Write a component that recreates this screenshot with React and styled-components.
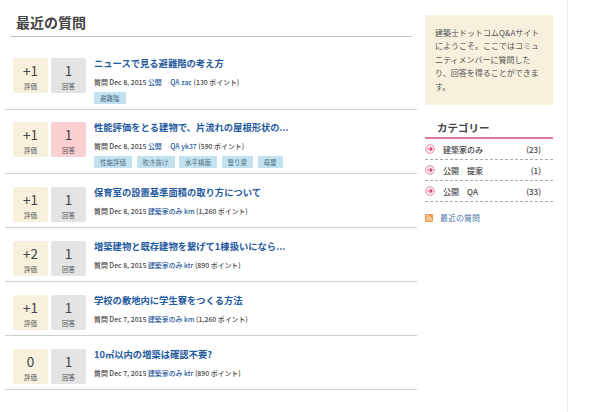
import React from "react";
import styled, { createGlobalStyle } from "styled-components";

const Global = createGlobalStyle`
  html, body { margin: 0; padding: 0; background: #fff; }
  body { font-family: "Noto Sans CJK JP", "Noto Sans", sans-serif; color: #444; }
  a { text-decoration: none; color: #1f5a9e; }
`;

const Page = styled.div`
  display: flex;
  width: 568px;
  height: 412px;
  box-sizing: border-box;
  border-right: 1px solid #eeeeee;
  overflow: hidden;
`;
const Main = styled.main`
  width: 412px;
  margin-left: 5px;
  flex: none;
`;
const Heading = styled.h1`
  margin: 0 5px;
  padding: 13px 0 0 6px;
  height: 23px;
  font-size: 14px;
  line-height: 19px;
  font-weight: 700;
  color: #444;
  border-bottom: 1px solid #c4c4c4;
`;
const List = styled.div`
  margin-top: 8px;
`;
const Row = styled.div`
  display: flex;
  padding: ${p => (p.$tagged ? "12px" : "13px")} 0 5px 8px;
  border-bottom: 1px solid #cfcfcf;
  &:first-child { padding-top: 13px; }
`;
const Stat = styled.div`
  width: 35px;
  height: 35px;
  margin-right: 3px;
  flex: none;
  border-radius: 2px;
  background: ${p => p.$bg};
  text-align: center;
  color: #444;
`;
const Num = styled.div`
  font-size: 13.5px;
  line-height: 15px;
  padding-top: 5px;
`;
const Label = styled.div`
  margin-top: 3px;
  font-size: 6.5px;
  line-height: 10px;
  color: #555;
`;
const Body = styled.div`
  margin-left: 5px;
  min-width: 0;
`;
const Title = styled.a`
  display: block;
  margin-top: -1px;
  font-size: 9.3px;
  line-height: 12px;
  font-weight: 700;
  white-space: nowrap;
`;
const Meta = styled.div`
  margin-top: 7.5px;
  font-size: 6.9px;
  line-height: 10px;
  color: #4a4a4a;
  font-weight: 500;
  white-space: pre;
`;
const Tags = styled.div`
  display: flex;
  gap: 4.5px;
  margin-top: 5.5px;
`;
const Tag = styled.span`
  height: 12px;
  padding: 0 6px;
  font-size: 6.5px;
  line-height: 12px;
  color: #4d6f80;
  background: #c3e2f0;
  border-radius: 1px;
`;
const Side = styled.aside`
  width: 128px;
  margin-left: 8px;
  flex: none;
  padding-top: 15px;
`;
const Welcome = styled.div`
  height: 90px;
  box-sizing: border-box;
  padding: 11px 10px 0;
  background: #f7f0dc;
  border-radius: 2px;
  font-size: 8px;
  line-height: 13.4px;
  color: #555;
`;
const CatTitle = styled.h2`
  margin: 14px 0 0;
  padding-left: 12px;
  height: 18px;
  font-size: 10.5px;
  line-height: 17px;
  font-weight: 700;
  color: #444;
  border-bottom: 2px solid #d9789a;
`;
const CatRow = styled.div`
  display: flex;
  align-items: center;
  height: 20px;
  border-bottom: 1px dashed #aaa;
  font-size: 8px;
  font-weight: 500;
  color: #444;
`;
const CatName = styled.span`
  flex: 1;
  margin-left: 8px;
  white-space: pre;
`;
const CatCount = styled.span`
  margin-right: 12px;
`;
const Feed = styled.a`
  display: flex;
  align-items: center;
  gap: 7px;
  margin-top: 10px;
  font-size: 8px;
  line-height: 12px;
  color: #4a74a8;
`;

const Arrow = () => (
  <svg width="10" height="10" viewBox="0 0 10 10" style={{ flex: "none" }}>
    <circle cx="5" cy="5" r="4.3" fill="#fbeef2" stroke="#e58aa8" strokeWidth="1" />
    <path d="M2.6 5H7M5.2 3.2 7.1 5 5.2 6.8" fill="none" stroke="#d6386f" strokeWidth="1.1" />
  </svg>
);

const Rss = () => (
  <svg width="8" height="8" viewBox="0 0 8 8" style={{ flex: "none" }}>
    <rect width="8" height="8" rx="1" fill="#ee9a4d" />
    <circle cx="2" cy="6" r=".8" fill="#fff" />
    <path d="M1.3 3.6A3.1 3.1 0 0 1 4.4 6.7M1.3 1.6A5.1 5.1 0 0 1 6.4 6.7" fill="none" stroke="#fff" strokeWidth=".9" />
  </svg>
);

const questions = [
  { score: "+1", title: "ニュースで見る避難階の考え方", date: "Dec 8, 2015", where: "公開　", user: "QA zac", pts: "130", tags: ["避難階"] },
  { score: "+1", hot: true, title: "性能評価をとる建物で、片流れの屋根形状の...", date: "Dec 8, 2015", where: "公開　", user: "QA yk37", pts: "590", tags: ["性能評価", "吹き抜け", "水平構面", "登り梁", "母屋"] },
  { score: "+1", title: "保育室の設置基準面積の取り方について", date: "Dec 8, 2015", where: "建築家のみ", user: "km", pts: "1,260" },
  { score: "+2", title: "増築建物と既存建物を繋げて1棟扱いになら...", date: "Dec 8, 2015", where: "建築家のみ", user: "ktr", pts: "890" },
  { score: "+1", title: "学校の敷地内に学生寮をつくる方法", date: "Dec 7, 2015", where: "建築家のみ", user: "km", pts: "1,260" },
  { score: "0", title: "10㎡以内の増築は確認不要?", date: "Dec 7, 2015", where: "建築家のみ", user: "ktr", pts: "890" },
];

const categories = [
  { name: "建築家のみ", count: 23 },
  { name: "公開　提案", count: 1 },
  { name: "公開　QA", count: 33 },
];

export default function App() {
  return (
    <Page>
      <Global />
      <Main>
        <Heading>最近の質問</Heading>
        <List>
          {questions.map(q => (
            <Row key={q.title} $tagged={!!q.tags}>
              <Stat $bg="#f7f0dc">
                <Num>{q.score}</Num>
                <Label>評価</Label>
              </Stat>
              <Stat $bg={q.hot ? "#fcd0d3" : "#e4e4e4"}>
                <Num>1</Num>
                <Label>回答</Label>
              </Stat>
              <Body>
                <Title href="#">{q.title}</Title>
                <Meta>
                  質問 {q.date} <a href="#">{q.where} {q.user}</a> ({q.pts} ポイント)
                </Meta>
                {q.tags && (
                  <Tags>
                    {q.tags.map(t => <Tag key={t}>{t}</Tag>)}
                  </Tags>
                )}
              </Body>
            </Row>
          ))}
        </List>
      </Main>
      <Side>
        <Welcome>建築士ドットコムQ&Aサイトにようこそ。ここではコミュニティメンバーに質問したり、回答を得ることができます。</Welcome>
        <CatTitle>カテゴリー</CatTitle>
        {categories.map(c => (
          <CatRow key={c.name}>
            <Arrow />
            <CatName>{c.name}</CatName>
            <CatCount>({c.count})</CatCount>
          </CatRow>
        ))}
        <Feed href="#"><Rss />最近の質問</Feed>
      </Side>
    </Page>
  );
}
